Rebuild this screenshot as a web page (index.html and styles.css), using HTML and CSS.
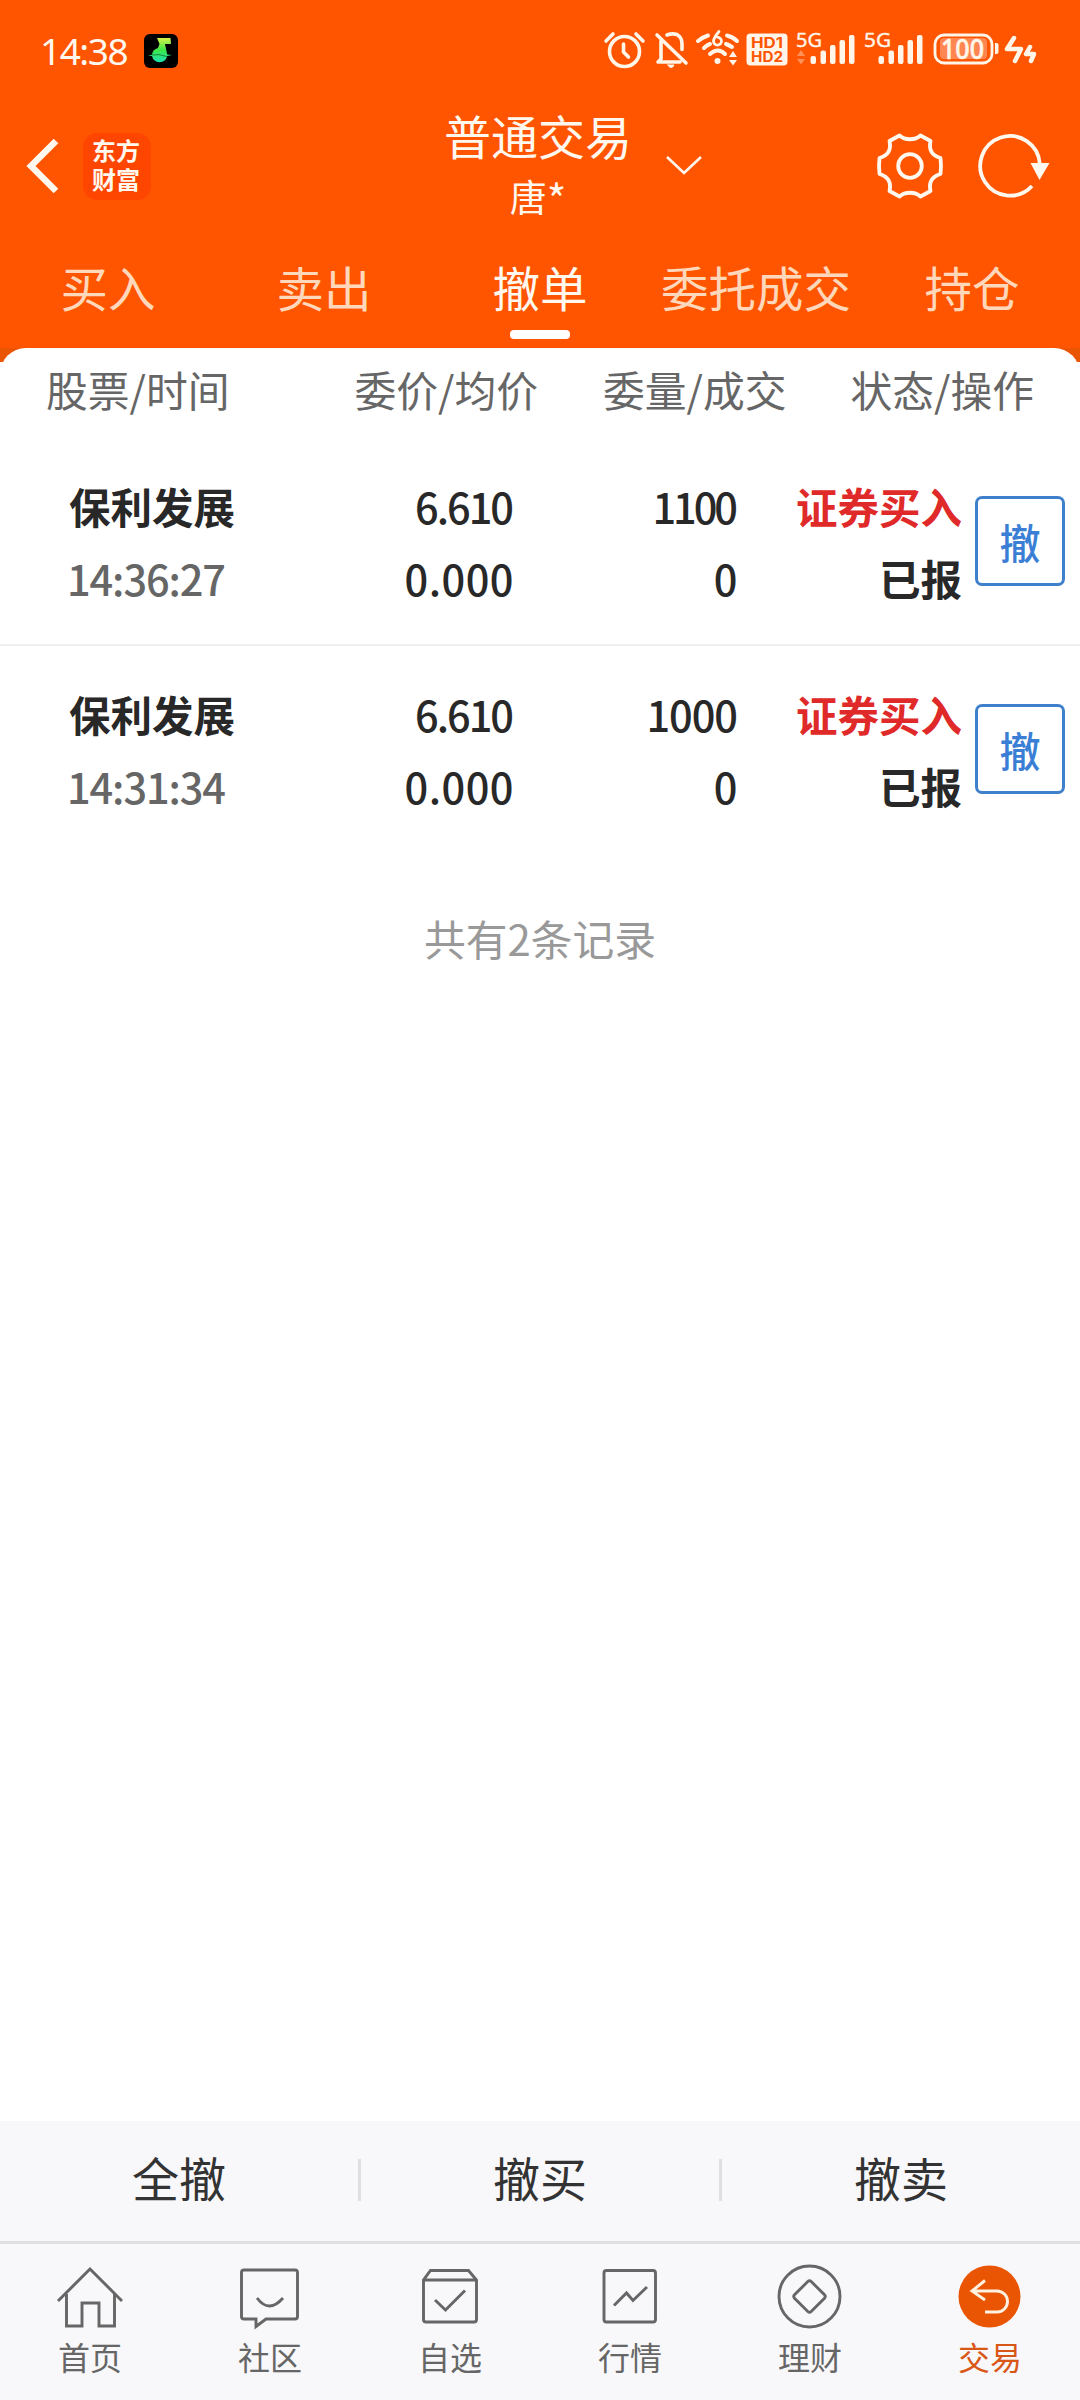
FILE: index.html
```html
<!DOCTYPE html>
<html lang="zh-CN">
<head>
<meta charset="utf-8">
<title>普通交易</title>
<link rel="stylesheet" href="styles.css">
</head>
<body>
<div class="app">
  <header class="top">
    <div class="status">
      <span class="clock">14:38</span>
      <svg class="music" width="34" height="34" viewBox="0 0 34 34">
        <defs><linearGradient id="note" x1="0" y1="0" x2="0" y2="1"><stop offset="0" stop-color="#d8f24a"/><stop offset=".5" stop-color="#3be848"/><stop offset="1" stop-color="#1fe0b4"/></linearGradient></defs>
        <rect width="34" height="34" rx="6" fill="#000"/>
        <path d="M13 4h13.500l.5 6h-6l2.200 10.500 4.800.6-4.800 1a7.800 7.800 0 0 1-15.200 0L4 21.500l4-.8a8 8 0 0 1 6-6.700l1.500-4z" fill="url(#note)"/>
        <path d="M8 21l7-.4 8 2" stroke="#0a5a20" stroke-width=".7" fill="none"/>
      </svg>
      <svg class="sysicons" width="450" height="60" viewBox="590 20 450 60" fill="none" stroke="#fff5e8" stroke-width="3.600" stroke-linecap="round" stroke-linejoin="round">
        <circle cx="624.500" cy="51.500" r="15"/>
        <path d="M623.500 44v8l5 5M606 41l7-7M636 34l7 7"/>
        <path d="M657 35l29 28M661 41v18l-3 3h22M667 35q5-2 10-.5 5 3 5 9v6"/>
        <path d="M668 65h6q-1 2.500-3 2.500t-3-2.500z" fill="#fff5e8" stroke-width="1"/>
        <path d="M698 41q5-4 10-5.500M727 35.500q6 1.500 10 5.500M704 48q3-3 6-4M726 44q3 1 6 3M710 54q8-7 15 0" stroke-width="4"/>
        <circle cx="717.500" cy="61" r="3" fill="#fff5e8" stroke="none"/>
        <path d="M719 31.500q-5 6-5.500 9.500a4 4 0 1 0 4-3.800" stroke-width="2.800"/>
        <path d="M729 57l4-6 4 6zM729 60h8l-4 5.500z" fill="#fff5e8" stroke="none"/>
        <rect x="746.500" y="33.500" width="41" height="32" rx="4" fill="#fff5e8" stroke="none"/>
        <g stroke="none" fill="#ff5500" font-family="Inter,sans-serif" font-weight="700" font-size="14"><text x="751" y="47.500" textLength="32" lengthAdjust="spacingAndGlyphs">HD1</text><text x="751" y="62" textLength="32" lengthAdjust="spacingAndGlyphs">HD2</text></g>
        <g stroke="#fff5e8" stroke-width=".4" fill="#fff5e8" font-family="'Noto Sans',sans-serif" font-size="20"><text x="796" y="47" textLength="26" lengthAdjust="spacingAndGlyphs">5G</text><text x="864" y="47" textLength="27" lengthAdjust="spacingAndGlyphs">5G</text></g>
        <path d="M797 56l4-6 4 6zM797 59h8l-4 5.500z" fill="#ff9058" stroke="none"/>
        <g stroke="none" fill="#fff5e8">
          <rect x="810.500" y="56" width="5.500" height="8" rx="2"/><rect x="820.500" y="50.500" width="5.500" height="13.500" rx="2"/><rect x="830" y="45" width="5.500" height="19" rx="2"/><rect x="839.500" y="40" width="5.500" height="24" rx="2"/><rect x="849" y="35" width="5.500" height="29" rx="2"/>
          <rect x="878.500" y="56" width="5.500" height="8" rx="2"/><rect x="888.500" y="50.500" width="5.500" height="13.500" rx="2"/><rect x="898" y="45" width="5.500" height="19" rx="2"/><rect x="907.500" y="40" width="5.500" height="24" rx="2"/><rect x="917" y="35" width="5.500" height="29" rx="2"/>
          <rect x="940" y="38" width="47" height="21" rx="4" fill="#ff8650"/>
          <path d="M995 43h1.500a2 2 0 0 1 2 2v7a2 2 0 0 1-2 2H995z"/>
        </g>
        <rect x="935" y="35" width="57" height="28" rx="9" stroke-width="2.800"/>
        <text x="941" y="59" stroke="#fff5e8" stroke-width=".6" fill="#fff5e8" font-family="'Noto Sans',sans-serif" font-weight="500" font-size="27" textLength="43" lengthAdjust="spacingAndGlyphs">100</text>
        <path d="M1014 38l-7 11h14l-6 12M1030 47l-4 7h8l-3 7" stroke-width="4.500"/>
      </svg>
    </div>
    <div class="titlebar">
      <svg class="back" width="34" height="62" viewBox="0 0 34 62" fill="none" stroke="#fff8ee" stroke-width="6.500"><path d="M31 6L6 31l25 25"/></svg>
      <div class="logo">东方<br>财富</div>
      <div class="title"><div class="t1">普通交易</div><div class="t2">唐<span class="star">*</span></div></div>
      <svg class="chev" width="38" height="24" viewBox="0 0 38 24" fill="none" stroke="#fff8ee" stroke-width="2.600"><path d="M2 3l17 16L36 3"/></svg>
      <svg class="gear" width="70" height="70" viewBox="-35 -35 70 70" fill="none" stroke="#fff8ee" stroke-width="3.800" stroke-linejoin="round"><circle r="11.800"/><path d="M-10.500-30.500C-5-25.500 5-25.500 10.500-30.500L20.500-25C18.500-16 22-10.500 30.500-8L31 0 30.500 8C22 10.500 18.500 16 20.500 25L10.500 30.500C5 25.500-5 25.500-10.500 30.500L-20.500 25C-18.500 16-22 10.500-30.500 8L-31 0-30.500-8C-22-10.500-18.500-16-20.500-25Z"/></svg>
      <svg class="reload" width="74" height="70" viewBox="-33 -35 74 70" fill="none" stroke="#fff8ee" stroke-width="3.800"><path d="M22 20A29.800 29.800 0 1 1 29.800-2"/><path d="M20.500-3H39.500L29.500 14z" fill="#fff8ee" stroke="none"/></svg>
    </div>
    <nav class="tabs"><span>买入</span><span>卖出</span><span class="on">撤单</span><span>委托成交</span><span>持仓</span></nav>
  </header>
  <main class="sheet">
    <div class="heads"><span>股票/时间</span><span>委价/均价</span><span>委量/成交</span><span>状态/操作</span></div>
    <div class="order">
      <div class="col name"><b>保利发展</b><span class="time">14:36:27</span></div>
      <div class="col price"><span class="narrow">6.610</span><span>0.000</span></div>
      <div class="col qty"><span class="narrower">1100</span><span>0</span></div>
      <div class="col state"><b class="buy">证券买入</b><b>已报</b></div>
      <button class="cancel">撤</button>
    </div>
    <div class="order">
      <div class="col name"><b>保利发展</b><span class="time">14:31:34</span></div>
      <div class="col price"><span class="narrow">6.610</span><span>0.000</span></div>
      <div class="col qty"><span class="snug">1000</span><span>0</span></div>
      <div class="col state"><b class="buy">证券买入</b><b>已报</b></div>
      <button class="cancel">撤</button>
    </div>
    <p class="total">共有2条记录</p>
  </main>
  <div class="actions"><span>全撤</span><span>撤买</span><span>撤卖</span></div>
  <nav class="bottom">
    <div class="item"><svg viewBox="0 0 70 66"><path d="M3 37L35 5l32 32M11.500 30v32H27V39h17v23h15.500V30"/></svg><span>首页</span></div>
    <div class="item"><svg viewBox="0 0 70 66"><path d="M9 6h51q2.500 0 2.500 2.500v44q0 2.500-2.500 2.500H31l-10 7.500V55H9q-2.500 0-2.500-2.500v-44Q6.500 6 9 6zM22 34q12 16 26 0"/></svg><span>社区</span></div>
    <div class="item"><svg viewBox="0 0 70 66"><path d="M15.500 6.500h38l8 9.500v39.500q0 2.500-2.500 2.500H11q-2.500 0-2.500-2.500V16zM8.500 16h53M20 36l10.500 10L50 26.500"/></svg><span>自选</span></div>
    <div class="item"><svg viewBox="0 0 70 66"><rect x="9" y="6.500" width="51.500" height="51.500" rx="2.500"/><path d="M19 41.500L31.500 29l6.500 7.500L52 23"/></svg><span>行情</span></div>
    <div class="item"><svg viewBox="0 0 70 66"><circle cx="34.500" cy="32.500" r="30.500"/><path d="M32.800 17.500q1.700-1.500 3.400 0l13.300 13.300q1.500 1.700 0 3.400L36.200 47.500q-1.700 1.500-3.400 0L19.500 34.200q-1.500-1.700 0-3.400z"/></svg><span>理财</span></div>
    <div class="item on"><svg viewBox="0 0 70 66"><circle cx="34.500" cy="32.500" r="31"/><path d="M30 16.500L17 27l13 9M17 27h25a10.500 10.500 0 0 1 0 21H30"/></svg><span>交易</span></div>
  </nav>
</div>
</body>
</html>
```
FILE: styles.css
```css
* { box-sizing: border-box; }
body { margin: 0; font-family: "Noto Sans CJK SC", sans-serif; color: #282828; }
.app { width: 1080px; height: 2400px; display: flex; flex-direction: column; background: #fff; }
svg { display: block; flex: none; }
.top { height: 362px; margin-bottom: -14px; flex: none; background: linear-gradient(#ff5500 348px, #ea5504 348px); color: #fff8ee; }
.status { height: 102px; display: flex; align-items: center; padding-left: 40px; }
.clock { width: 88px; font: 37px/40px "Noto Sans", sans-serif; letter-spacing: -1.5px; }
.music { margin-left: 16px; }
.sysicons { margin: -2px 0 0 412px; }
.titlebar { height: 128px; display: flex; align-items: center; }
.back { margin-left: 25px; }
.logo { margin-left: 24px; width: 68px; height: 67px; padding: 2px 2px 0 0; border-radius: 14px; background: #ff4600; text-align: center; font-size: 24px; line-height: 29px; font-weight: 700; }
.title { width: 188px; margin-left: 293px; text-align: center; }
.t1 { font-size: 47px; line-height: 52px; white-space: nowrap; }
.t2 { padding-top: 7px; font-size: 37px; line-height: 56px; }
.star { display: inline-block; font-size: 42px; line-height: 40px; transform: translateY(4px); }
.chev { margin-left: 33px; }
.gear { margin-left: 172px; }
.reload { margin-left: 32px; }
.tabs { display: grid; grid-template-columns: repeat(5, 1fr); height: 118px; font-size: 47.5px; line-height: 114px; text-align: center; color: #ffd8bb; }
.tabs .on { color: #fff8ee; position: relative; }
.tabs .on::after { content: ""; position: absolute; left: 78px; bottom: 9px; width: 60px; height: 9px; border-radius: 4px; background: #fff; }
.sheet { flex: 1; background: #fff; border-radius: 26px 26px 0 0; }
.heads { height: 88px; display: flex; justify-content: space-between; padding: 0 46px; font-size: 41.8px; line-height: 83px; color: #666; }
.heads span:nth-child(2) { margin-left: 61px; }
.heads span:nth-child(3) { margin-left: 1px; }
.order { height: 208px; display: flex; align-items: center; padding-top: 1px; font-size: 41.5px; line-height: 72px; font-weight: 500; }
.order + .order { padding-top: 0; border-top: 2px solid #efefef; }
.col { display: flex; flex-direction: column; padding-top: 2px; }
.col b { font-weight: 700; }
.name { width: 240px; padding-left: 69px; }
.time { color: #666; letter-spacing: -1.1px; margin-left: -2px; }
.price { width: 274px; text-align: right; letter-spacing: .5px; }
.qty { width: 224px; text-align: right; letter-spacing: .5px; }
.snug { letter-spacing: -1px; margin-right: 1px; }
.narrow { letter-spacing: -2px; margin-right: 2px; }
.narrower { letter-spacing: -3px; margin-right: 3px; }
.state { width: 224px; text-align: right; }
.state .buy { color: #e02a2a; }
.cancel { width: 90px; height: 90px; margin: 0 0 0 13px; padding: 0; border: 3px solid #3f80cc; border-radius: 7px; background: #fff; color: #3a7fd5; font: 500 41px/80px "Noto Sans CJK SC", sans-serif; }
.total { margin: 47px 0 0; text-align: center; font-size: 41.8px; line-height: 78px; color: #999; }
.actions { height: 120px; padding-bottom: 2px; flex: none; display: grid; grid-template-columns: 358px 361px 361px; align-items: center; background: #f8f8fa; text-align: center; font-size: 47px; line-height: 36px; color: #333; }
.actions span { height: 42px; }
.actions span + span { border-left: 3px solid #dedfe1; }
.bottom { height: 159px; flex: none; display: grid; grid-template-columns: repeat(6, 1fr); background: #f8f8fa; border-top: 3px solid #dfe0e2; }
.item { display: flex; flex-direction: column; align-items: center; padding-top: 20px; font-size: 32px; line-height: 48px; color: #666; }
.item svg { width: 70px; height: 66px; margin: 0 0 2px -1px; fill: none; stroke: #666; stroke-width: 2.900; }
.item.on { color: #d95716; }
.item.on svg { stroke: #fff1df; }
.item.on circle { fill: #ea5504; stroke: none; }
```
